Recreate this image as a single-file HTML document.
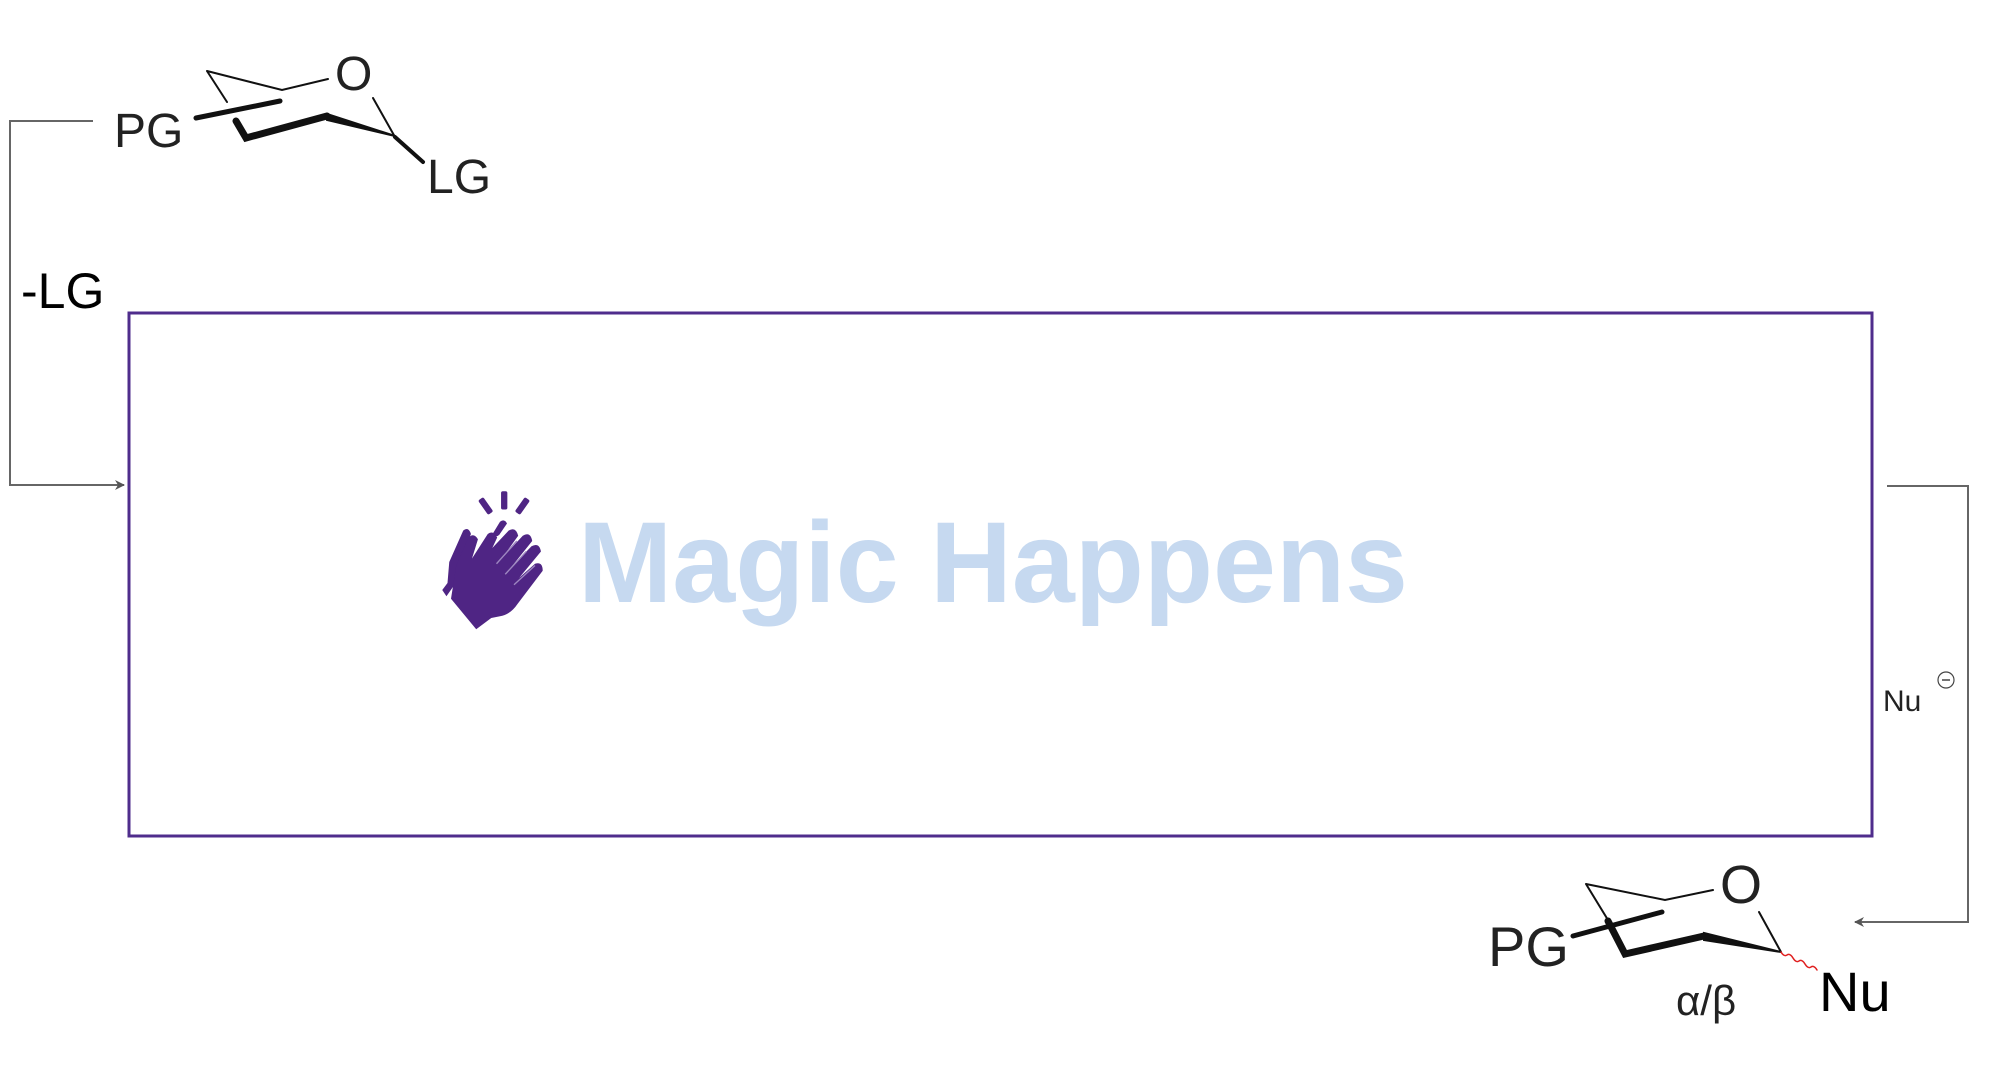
<!DOCTYPE html>
<html><head><meta charset="utf-8"><style>
html,body{margin:0;padding:0;background:#fff;}
body{width:2008px;height:1081px;position:relative;overflow:hidden;font-family:"Liberation Sans",Arial,sans-serif;}
svg{position:absolute;left:0;top:0;}
</style></head><body>
<svg width="2008" height="1081" viewBox="0 0 2008 1081">
<defs>
<marker id="ar" markerWidth="10" markerHeight="10" refX="9" refY="5" orient="auto" markerUnits="userSpaceOnUse">
<path d="M0,0 L10,5 L0,10 L3,5 Z" fill="#555"/></marker>
</defs>
<rect x="129" y="313" width="1743" height="523" fill="none" stroke="#4f2d8c" stroke-width="3"/>
<polyline points="93,121 10,121 10,485 124,485" fill="none" stroke="#666" stroke-width="2" marker-end="url(#ar)"/>
<text x="21" y="308" font-size="50" fill="#000">-LG</text>
<g stroke="#111" fill="none" stroke-linecap="round">
<path d="M207,71 L227,102 M207,71 L282,90 L328,79 M373,98 L395,137" stroke-width="2"/>
<path d="M196,118 L280,101" stroke-width="5"/>
<path d="M236,121 L246,138 L327,116" stroke-width="7" stroke-linejoin="miter"/>
<path d="M327,114 L395,136 L327,120 Z" fill="#111" stroke-width="2"/>
<path d="M395,137 L423,162" stroke-width="4"/>
</g>
<text x="114" y="147" font-size="48" fill="#222">PG</text>
<text x="335" y="90" font-size="48" fill="#222">O</text>
<text x="427" y="193" font-size="48" fill="#222">LG</text>
<polyline points="1887,486 1968,486 1968,922 1855,922" fill="none" stroke="#666" stroke-width="2" marker-end="url(#ar)"/>
<text x="1883" y="711" font-size="30" fill="#222">Nu</text>
<circle cx="1946" cy="680" r="8" fill="none" stroke="#444" stroke-width="1.2"/>
<line x1="1942" y1="680" x2="1950" y2="680" stroke="#444" stroke-width="1.5"/>
<g stroke="#111" fill="none" stroke-linecap="round">
<path d="M1586,884 L1608,920 M1586,884 L1665,900 L1713,890 M1759,912 L1781,952" stroke-width="2"/>
<path d="M1573,936 L1662,912" stroke-width="5"/>
<path d="M1608,921 L1625,954 L1704,936" stroke-width="7"/>
<path d="M1704,933 L1781,952 L1704,940 Z" fill="#111" stroke-width="2"/>
<path d="M1781,952 q3,5 6,3 q3,-2 6,3 q3,5 6,3 q3,-2 6,3 q3,5 6,3 q3,-2 6,3" stroke="#e02020" stroke-width="1.5"/>
</g>
<text x="1488" y="966" font-size="56" fill="#222">PG</text>
<text x="1720" y="903" font-size="54" fill="#222">O</text>
<text x="1819" y="1011" font-size="56" fill="#000">Nu</text>
<text x="1676" y="1015" font-size="42" fill="#222">α/β</text>
<text x="578" y="602" font-size="115" font-weight="bold" fill="#c6d9f0" textLength="830" lengthAdjust="spacingAndGlyphs">Magic Happens</text>
<g transform="translate(430,478) scale(0.35)" fill="#4f2584">
<path d="M35,320 L50,300 L55,240 L95,150 Q110,138 117,160 L82,245 L72,302 L47,338 Z"/>
<path d="M60,345 L75,250 L110,170 Q125,155 137,175 L120,230 L165,160 Q180,148 192,170 L178,200 L225,150 Q245,138 252,165 L205,230 L265,165 Q287,152 292,180 L232,255 L290,195 Q312,183 317,210 L255,285 L300,245 Q322,238 322,265 L250,360 Q230,390 200,395 L175,400 L132,432 Z"/>
<path d="M180,158 L200,125 Q212,115 220,130 L198,162 Q188,172 180,158 Z"/>
<rect x="203" y="38" width="18" height="52" rx="5"/>
<rect x="150" y="55" width="18" height="50" rx="5" transform="rotate(-35 159 80)"/>
<rect x="255" y="55" width="18" height="50" rx="5" transform="rotate(35 264 80)"/>
</g>
<g transform="translate(430,478) scale(0.35)" stroke="#9d86c0" stroke-width="4">
<path d="M190,245 L248,180 M215,275 L275,210 M240,305 L300,250"/>
</g>
</svg>
</body></html>
